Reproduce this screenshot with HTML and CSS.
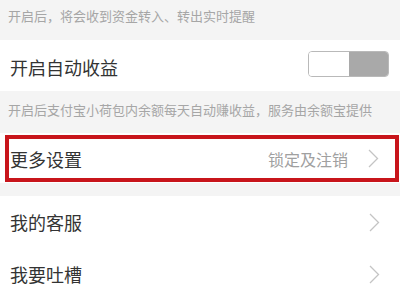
FILE: index.html
```html
<!DOCTYPE html>
<html lang="zh">
<head>
<meta charset="utf-8">
<link rel="stylesheet" href="styles.css">
</head>
<body>
<div class="page">
  <div class="desc desc-first">开启后，将会收到资金转入、转出实时提醒</div>
  <div class="row row-toggle">
    <span class="title">开启自动收益</span>
    <span class="switch"><span class="switch-on"></span><span class="switch-off"></span></span>
  </div>
  <div class="desc desc-second">开启后支付宝小荷包内余额每天自动赚收益，服务由余额宝提供</div>
  <div class="row-wrap">
    <div class="row row-marked">
      <span class="title">更多设置</span>
      <span class="right"><span class="value">锁定及注销</span>
        <svg class="chev" width="11" height="19" viewBox="0 0 11 19"><polyline points="1,1 9.5,9.5 1,18" fill="none" stroke="#c4c4c4" stroke-width="1.3"/></svg>
      </span>
    </div>
  </div>
  <div class="gap"></div>
  <div class="row row-plain">
    <span class="title">我的客服</span>
    <svg class="chev" width="11" height="19" viewBox="0 0 11 19"><polyline points="1,1 9.5,9.5 1,18" fill="none" stroke="#c4c4c4" stroke-width="1.3"/></svg>
  </div>
  <div class="row row-plain">
    <span class="title">我要吐槽</span>
    <svg class="chev" width="11" height="19" viewBox="0 0 11 19"><polyline points="1,1 9.5,9.5 1,18" fill="none" stroke="#c4c4c4" stroke-width="1.3"/></svg>
  </div>
</div>
</body>
</html>
```
FILE: styles.css
```css
html, body {
  margin: 0;
  padding: 0;
  background: #f4f4f4;
  font-family: "Noto Sans CJK SC", "Noto Sans", sans-serif;
}
.page {
  width: 400px;
  height: 292px;
  overflow: hidden;
}
.desc {
  font-size: 13px;
  color: #a6a6a6;
  padding-left: 8px;
  box-sizing: border-box;
  line-height: 18px;
}
.desc-first {
  height: 40px;
  padding-top: 7px;
}
.desc-second {
  height: 42px;
  padding-top: 10px;
}
.row {
  background: #fff;
  display: flex;
  align-items: center;
  justify-content: space-between;
  box-sizing: border-box;
}
.title {
  font-size: 18px;
  color: #333;
  line-height: 24px;
}
.row-toggle {
  height: 51px;
  padding: 2px 11px 0 10px;
}
.switch {
  display: flex;
  width: 81px;
  height: 26px;
  border: 1.5px solid #b9b9b9;
  border-radius: 4px;
  box-sizing: border-box;
  overflow: hidden;
  margin-top: -6px;
}
.switch-on {
  flex: 1;
  background: #fff;
}
.switch-off {
  flex: 1;
  background: #a9a9a9;
}
.row-wrap {
  background: #fff;
  padding: 2px 1px 1px 5px;
}
.row-marked {
  height: 47px;
  border: 4px solid #c8151b;
  padding: 0 16px 0 1px;
}
.right {
  display: flex;
  align-items: center;
  gap: 20px;
}
.value {
  font-size: 16px;
  color: #a0a0a0;
  line-height: 22px;
}
.chev {
  display: block;
}
.gap {
  height: 13px;
}
.row-plain {
  height: 52px;
  padding: 0 20px 0 10px;
}
```
